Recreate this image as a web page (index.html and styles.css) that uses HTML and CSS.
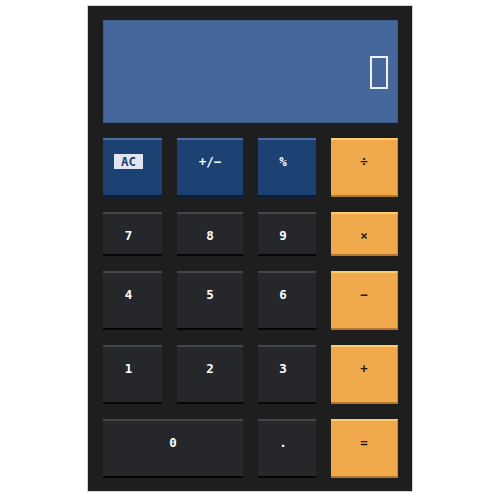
FILE: index.html
```html
<!DOCTYPE html>
<html>
<head>
<meta charset="utf-8">
<link rel="stylesheet" href="styles.css">
</head>
<body>
<div class="calc">
  <div class="display"><span class="tofu"></span></div>
  <div class="keys">
    <button class="key fn narrow"><span class="ac">AC</span></button>
    <button class="key fn">+/−</button>
    <button class="key fn narrow">%</button>
    <button class="key op">÷</button>

    <button class="key num narrow">7</button>
    <button class="key num">8</button>
    <button class="key num narrow">9</button>
    <button class="key op">×</button>

    <button class="key num narrow">4</button>
    <button class="key num">5</button>
    <button class="key num narrow">6</button>
    <button class="key op">−</button>

    <button class="key num narrow">1</button>
    <button class="key num">2</button>
    <button class="key num narrow">3</button>
    <button class="key op">+</button>

    <button class="key num zero">0</button>
    <button class="key num narrow">.</button>
    <button class="key op">=</button>
  </div>
</div>
</body>
</html>
```
FILE: styles.css
```css
html, body {
  margin: 0;
  padding: 0;
  background: #ffffff;
}
.calc {
  box-sizing: border-box;
  width: 326px;
  height: 487px;
  margin: 5px 0 0 87px;
  border: 1px solid #d4d4d4;
  background: #1e1e1e;
  padding: 14px 14px 13px 15px;
}
.display {
  box-sizing: border-box;
  height: 103px;
  width: 295px;
  background: #45679b;
  border: 1px solid #3a5b8c;
  display: flex;
  justify-content: flex-end;
  align-items: center;
  padding-right: 9px;
  margin-bottom: 15px;
}
.tofu {
  box-sizing: border-box;
  width: 18px;
  height: 33px;
  border: 2px solid #eef2f8;
  margin-top: 2px;
}
.keys {
  display: grid;
  grid-template-columns: 59px 66px 58px 67px;
  grid-template-rows: 59px 44px 59px 59px 59px;
  column-gap: 15px;
  row-gap: 15px;
}
.key {
  box-sizing: border-box;
  margin: 0;
  border: 0;
  border-top: 2px solid;
  border-bottom: 2px solid;
  display: flex;
  justify-content: center;
  align-items: flex-start;
  padding: 14px 0 0 0;
  font-family: "DejaVu Sans Mono", monospace;
  font-weight: bold;
  font-size: 12.5px;
  line-height: 15px;
  color: #ffffff;
}
.narrow { padding-right: 8px; }
.fn {
  background: #1c4273;
  border-top-color: #4a6c9f;
  border-bottom-color: #0c1b3b;
}
.num {
  background: #25272b;
  border-top-color: #43464b;
  border-bottom-color: #050505;
}
.op {
  background: #f0aa4b;
  border-top-color: #f9cc6c;
  border-bottom-color: #b2772f;
  border-right: 1px solid #c98c3a;
  color: #1a1a1a;
}
.zero {
  grid-column: 1 / span 2;
}
.ac {
  display: inline-block;
  background: #dfe6ef;
  color: #1c3f70;
  padding: 0 7px;
  height: 15px;
  line-height: 15px;
}
```
